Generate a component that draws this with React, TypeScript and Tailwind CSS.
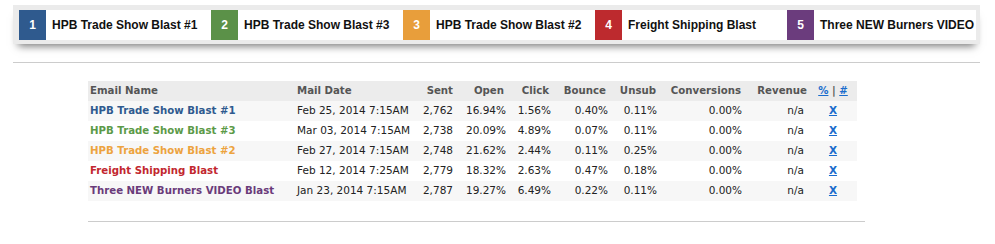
import React from "react";

const BLASTS = [
  { n: 1, name: "HPB Trade Show Blast #1", box: "bg-[#2f5a8e]", text: "text-[#2f5a8f]", date: "Feb 25, 2014 7:15AM", sent: "2,762", open: "16.94%", click: "1.56%", bounce: "0.40%", unsub: "0.11%" },
  { n: 2, name: "HPB Trade Show Blast #3", box: "bg-[#5b9148]", text: "text-[#5c9a48]", date: "Mar 03, 2014 7:15AM", sent: "2,738", open: "20.09%", click: "4.89%", bounce: "0.07%", unsub: "0.11%" },
  { n: 3, name: "HPB Trade Show Blast #2", box: "bg-[#e89e3b]", text: "text-[#eda33e]", date: "Feb 27, 2014 7:15AM", sent: "2,748", open: "21.62%", click: "2.44%", bounce: "0.11%", unsub: "0.25%" },
  { n: 4, name: "Freight Shipping Blast", box: "bg-[#bd2a2e]", text: "text-[#c2272f]", date: "Feb 12, 2014 7:25AM", sent: "2,779", open: "18.32%", click: "2.63%", bounce: "0.47%", unsub: "0.18%" },
  { n: 5, name: "Three NEW Burners VIDEO Blast", box: "bg-[#6b3c7d]", text: "text-[#6a3b7a]", date: "Jan 23, 2014 7:15AM", sent: "2,787", open: "19.27%", click: "6.49%", bounce: "0.22%", unsub: "0.11%" },
];

const verdana = "font-['DejaVu_Sans',Verdana,sans-serif]";

export default function App() {
  return (
    <div className="w-[995px] h-[244px] bg-white overflow-hidden">
      {/* legend strip */}
      <div className="mx-[13px] mt-[5px] w-[967px] bg-[#ebebeb] pt-[5px] pb-[4px] pl-[6px] pr-[4px] shadow-[0_7px_8px_-5px_rgba(0,0,0,0.55)]">
        <div className="flex h-[30px] bg-white overflow-hidden font-['Liberation_Sans',Arial,sans-serif] font-bold text-[12px] text-[#111]">
          {BLASTS.map((b) => (
            <div key={b.n} className="flex items-center w-[192px] shrink-0">
              <div className={`${b.box} w-[27px] h-[30px] shrink-0 flex items-center justify-center text-white`}>{b.n}</div>
              <span className="ml-[6px] whitespace-nowrap">{b.name}</span>
            </div>
          ))}
        </div>
      </div>

      <div className="mx-[13px] mt-[18px] w-[967px] h-px bg-[#cccccc]" />

      {/* stats table */}
      <div className="ml-[88px] mt-[18px] w-[777px]">
        <table className={`table-fixed w-[769px] border-collapse ${verdana} text-[10.5px]`}>
          <colgroup>
            <col className="w-[207px]" />
            <col className="w-[115px]" />
            <col className="w-[46px]" />
            <col className="w-[53px]" />
            <col className="w-[45px]" />
            <col className="w-[57px]" />
            <col className="w-[49px]" />
            <col className="w-[85px]" />
            <col className="w-[64px]" />
            <col className="w-[48px]" />
          </colgroup>
          <thead>
            <tr className="h-[20px] bg-[#ececec] text-[#555] text-[10.2px]">
              <th className="text-left pl-[2px] font-bold">Email Name</th>
              <th className="text-left pl-[2px] font-bold">Mail Date</th>
              <th className="text-right pr-[3px] font-bold">Sent</th>
              <th className="text-right pr-[5px] font-bold">Open</th>
              <th className="text-right pr-[5px] font-bold">Click</th>
              <th className="text-right pr-[5px] font-bold">Bounce</th>
              <th className="text-right pr-[4px] font-bold">Unsub</th>
              <th className="text-right pr-[4px] font-bold">Conversions</th>
              <th className="text-right pr-[2px] font-bold">Revenue</th>
              <th className="text-center font-bold">
                <span className="text-[#1a6ccc] underline">%</span> | <span className="text-[#1a6ccc] underline">#</span>
              </th>
            </tr>
          </thead>
          <tbody className="text-[#222]">
            {BLASTS.map((b, i) => (
              <tr key={b.n} className={`h-[20px] ${i % 2 === 0 ? "bg-[#f7f7f7]" : "bg-white"}`}>
                <td className={`pl-[2px] font-bold text-[10.2px] whitespace-nowrap ${b.text}`}>{b.name}</td>
                <td className="pl-[2px] whitespace-nowrap">{b.date}</td>
                <td className="text-right pr-[3px]">{b.sent}</td>
                <td className="text-right pr-[3px]">{b.open}</td>
                <td className="text-right pr-[3px]">{b.click}</td>
                <td className="text-right pr-[3px]">{b.bounce}</td>
                <td className="text-right pr-[3px]">{b.unsub}</td>
                <td className="text-right pr-[3px]">0.00%</td>
                <td className="text-right pr-[5px]">n/a</td>
                <td className="text-center font-bold">
                  <span className="text-[#1a6ccc] underline">X</span>
                </td>
              </tr>
            ))}
          </tbody>
        </table>
        <div className="mt-[20px] w-[777px] h-px bg-[#cccccc]" />
      </div>
    </div>
  );
}
